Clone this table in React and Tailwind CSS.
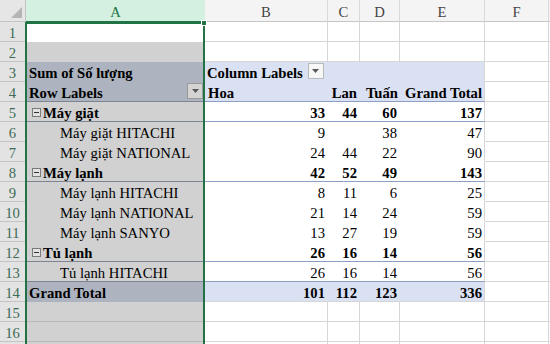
import React from 'react';

// Pivot table rows as laid out on the sheet (row number = Excel row)
const ROWS = [
  { n: 1, kind: 'blank' },
  { n: 2, kind: 'blank' },
  { n: 3, kind: 'head1' },
  { n: 4, kind: 'head2', line: true },
  { n: 5, kind: 'group', label: 'Máy giặt', v: [33, 44, 60, 137], line: true },
  { n: 6, kind: 'item', label: 'Máy giặt HITACHI', v: [9, '', 38, 47] },
  { n: 7, kind: 'item', label: 'Máy giặt NATIONAL', v: [24, 44, 22, 90] },
  { n: 8, kind: 'group', label: 'Máy lạnh', v: [42, 52, 49, 143], line: true },
  { n: 9, kind: 'item', label: 'Máy lạnh HITACHI', v: [8, 11, 6, 25] },
  { n: 10, kind: 'item', label: 'Máy lạnh NATIONAL', v: [21, 14, 24, 59] },
  { n: 11, kind: 'item', label: 'Máy lạnh SANYO', v: [13, 27, 19, 59] },
  { n: 12, kind: 'group', label: 'Tủ lạnh', v: [26, 16, 14, 56], line: true },
  { n: 13, kind: 'item', label: 'Tủ lạnh HITACHI', v: [26, 16, 14, 56], line: true },
  { n: 14, kind: 'total', label: 'Grand Total', v: [101, 112, 123, 336] },
  { n: 15, kind: 'blank' },
  { n: 16, kind: 'blank' },
  { n: 17, kind: 'blank', hideNumber: true },
];

const VAL_W = ['w-[123px]', 'w-[32px]', 'w-[40px]', 'w-[85px]'];

function Caret() {
  return (
    <svg width="7" height="4" viewBox="0 0 7 4">
      <path d="M0 0H7L3.5 4Z" fill="#5a5a5a" />
    </svg>
  );
}

function FilterButton({ shaded }) {
  return (
    <span
      className={
        'w-[16px] h-[16px] mt-[-2px] border flex items-center justify-center ' +
        (shaded ? 'bg-[#d4d4d4] border-[#9a9a9a]' : 'bg-[#f7f7f7] border-[#b9b9b9]')
      }
    >
      <Caret />
    </span>
  );
}

function Collapse() {
  return (
    <span className="w-[9px] h-[9px] mt-[3px] mr-[2px] border border-[#7a7a7a] bg-[#e2e2e2] flex items-center justify-center shrink-0">
      <span className="w-[5px] h-px bg-[#333]" />
    </span>
  );
}

function ColumnA({ r }) {
  const shaded = r.kind === 'head1' || r.kind === 'head2' || r.kind === 'total';
  const bg = r.n === 1 ? 'bg-white' : shaded ? 'bg-[#adb3bf]' : 'bg-[#d1d1d1]';
  const border = r.line
    ? 'border-[#7e8592]'
    : r.kind === 'blank' && r.n > 2
    ? 'border-[#b9b9b9]'
    : 'border-transparent';
  let content = null;
  if (r.kind === 'head1') content = <span className="pl-[3px] font-bold">Sum of Số lượng</span>;
  if (r.kind === 'head2')
    content = (
      <>
        <span className="pl-[3px] font-bold">Row Labels</span>
        <span className="ml-auto mr-[2px]">
          <FilterButton shaded />
        </span>
      </>
    );
  if (r.kind === 'group')
    content = (
      <span className="pl-[6px] flex font-bold">
        <Collapse />
        {r.label}
      </span>
    );
  if (r.kind === 'item') content = <span className="pl-[34px]">{r.label}</span>;
  if (r.kind === 'total') content = <span className="pl-[3px] font-bold">Grand Total</span>;
  return (
    <div className={'w-[179px] shrink-0 h-full flex items-start pt-[3px] leading-[16px] border-b ' + bg + ' ' + border}>
      {content}
    </div>
  );
}

function ValueCells({ r }) {
  if (r.kind === 'blank') {
    return (
      <>
        {VAL_W.map((w) => (
          <div key={w} className={w + ' shrink-0 h-full border-r border-b border-[#d6d6d6]'} />
        ))}
      </>
    );
  }
  const shaded = r.kind === 'head1' || r.kind === 'head2' || r.kind === 'total';
  const bg = shaded ? 'bg-[#d9e1f2]' : 'bg-white';
  const bottom = r.line ? 'border-b-[#8d9fc4]' : r.kind === 'total' ? 'border-b-[#d6d6d6]' : 'border-b-transparent';
  const base = ' shrink-0 h-full flex items-start pt-[3px] leading-[16px] border-b ' + bg + ' ' + bottom;

  if (r.kind === 'head1') {
    return (
      <>
        <div className={'w-[123px] pl-[2px] font-bold' + base}>
          <span>Column Labels</span>
          <span className="ml-[5px]">
            <FilterButton />
          </span>
        </div>
        <div className={'w-[32px]' + base} />
        <div className={'w-[40px]' + base} />
        <div className={'w-[85px] border-r border-r-[#d6d6d6]' + base} />
      </>
    );
  }
  if (r.kind === 'head2') {
    return (
      <>
        <div className={'w-[123px] pl-[3px] font-bold' + base}>Hoa</div>
        <div className={'w-[32px] justify-end pr-[3px] font-bold' + base}>Lan</div>
        <div className={'w-[40px] justify-end pr-[2px] font-bold' + base}>Tuấn</div>
        <div className={'w-[85px] justify-end pr-[2px] font-bold border-r border-r-[#d6d6d6]' + base}>Grand Total</div>
      </>
    );
  }
  const bold = r.kind === 'group' || r.kind === 'total' ? ' font-bold' : '';
  return (
    <>
      <div className={'w-[123px] justify-end pr-[3px]' + bold + base}>{r.v[0]}</div>
      <div className={'w-[32px] justify-end pr-[3px]' + bold + base}>{r.v[1]}</div>
      <div className={'w-[40px] justify-end pr-[3px]' + bold + base}>{r.v[2]}</div>
      <div className={'w-[85px] justify-end pr-[2px] border-r border-r-[#d6d6d6]' + bold + base}>{r.v[3]}</div>
    </>
  );
}

function SheetRow({ r }) {
  return (
    <div className="flex h-[20px]">
      <div className="w-[26px] shrink-0 h-full border-r border-b border-[#c4c4c4] bg-[#e3e3e3] text-[#3d6b55] text-center pt-[3px] leading-[16px]">
        {r.hideNumber ? null : r.n}
      </div>
      <ColumnA r={r} />
      <ValueCells r={r} />
      <div className="w-[64px] shrink-0 h-full border-r border-b border-[#d6d6d6] bg-white" />
      <div className="flex-1 h-full border-b border-[#d6d6d6] bg-white" />
    </div>
  );
}

function ColumnHeaders() {
  const cols = [
    ['B', 'w-[123px]'],
    ['C', 'w-[32px]'],
    ['D', 'w-[40px]'],
    ['E', 'w-[85px]'],
    ['F', 'w-[64px]'],
  ];
  return (
    <div className="flex h-[22px]">
      <div className="w-[26px] shrink-0 h-full bg-[#e6e6e6] border-r border-b border-[#c4c4c4] flex items-end justify-end pr-[3px] pb-[3px]">
        <svg width="11" height="11" viewBox="0 0 11 11">
          <path d="M11 0V11H0Z" fill="#b4b4b4" />
        </svg>
      </div>
      <div className="w-[179px] shrink-0 h-full bg-[#d3f0e0] border-b border-[#217346] text-[#217346] text-center pt-[4px] leading-[16px]">
        A
      </div>
      {cols.map(([c, w]) => (
        <div
          key={c}
          className={w + ' shrink-0 h-full bg-[#f4f4f4] border-r border-b border-r-[#dadada] border-b-[#c6c6c6] text-[#444] text-center pt-[4px] leading-[16px]'}
        >
          {c}
        </div>
      ))}
      <div className="flex-1 h-full bg-[#f4f4f4] border-b border-[#c6c6c6]" />
    </div>
  );
}

export default function App() {
  return (
    <div className="relative w-[550px] h-[344px] overflow-hidden bg-white text-black text-[14.67px] font-['Liberation_Serif',serif]">
      <ColumnHeaders />
      {ROWS.map((r) => (
        <SheetRow key={r.n} r={r} />
      ))}
      {/* selected column outline and fill handle */}
      <div className="absolute left-[25px] top-[22px] w-[180px] h-[340px] border-2 border-[#217346] pointer-events-none" />
      <div className="absolute left-[201px] top-[20px] w-[6px] h-[6px] bg-[#217346] border border-white pointer-events-none" />
    </div>
  );
}
